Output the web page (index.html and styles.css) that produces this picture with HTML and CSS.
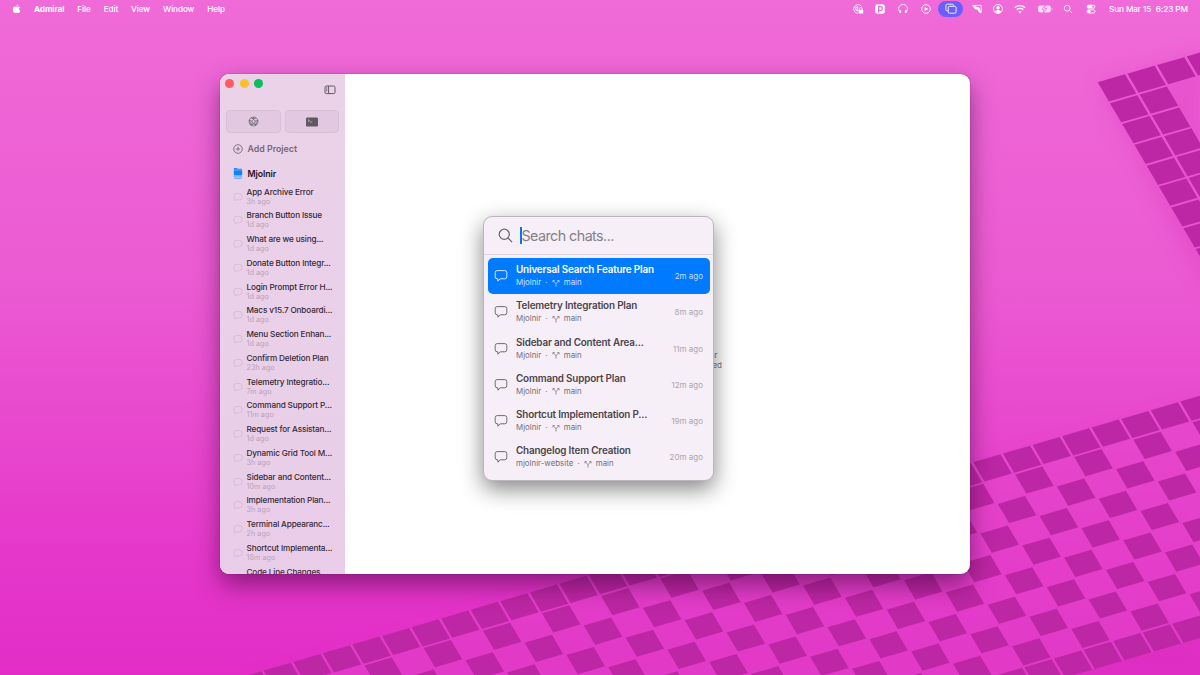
FILE: index.html
```html
<!DOCTYPE html>
<html lang="en">
<head>
<meta charset="utf-8">
<title>Admiral</title>
<link rel="stylesheet" href="styles.css">
</head>
<body>
<svg width="0" height="0" class="defs" aria-hidden="true">
  <symbol id="bubble" viewBox="0 0 14 14"><path d="M3.2 1.6h7.6a2 2 0 0 1 2 2v4.200a2 2 0 0 1-2 2H6.200L3.900 12.200V9.800h-.7a2 2 0 0 1-2-2V3.600a2 2 0 0 1 2-2z"/></symbol>
  <symbol id="dot" viewBox="0 0 10 10"><path d="M3.600 1.500h2.800a2.700 2.700 0 0 1 2.700 2.700v.9a2.700 2.700 0 0 1-2.700 2.700H3.800L1.600 8.700 2 7.200A2.700 2.700 0 0 1 .9 5.100v-.9a2.700 2.700 0 0 1 2.700-2.700z"/></symbol>
  <symbol id="branch" viewBox="0 0 8 8"><path d="M4 7.500V4.700L1.500 2M4 4.700L6.500 2M.9 3.300V1.500h1.800M7.100 3.300V1.500H5.300"/></symbol>
</svg>
<div class="desktop">
  <svg class="wallpaper" viewBox="0 0 1200 675">
    <defs>
      <filter id="soft" x="-10%" y="-10%" width="120%" height="120%"><feGaussianBlur stdDeviation="10"/></filter>
    </defs>
    <path class="shade" d="M1098 84L1210 50V300z M230 690L973 470 1210 402V690z" filter="url(#soft)"/>
    <g transform="matrix(29.57 -8.68 12.25 20.83 973.3 462.3)">
      <rect class="gaps" x="-28" y="0" width="40" height="9.92"/>
      <g class="tiles">
        <path class="solid" d="M-26 .46H12M-30 9.46H12"/>
        <path class="odd" d="M-25 1.46H12M-27 3.46H12M-29 5.46H12M-31 7.46H12"/>
        <path class="odd" d="M-26 2.46H12M-28 4.46H12M-30 6.46H12M-32 8.46H12"/>
      </g>
    </g>
    <g transform="matrix(29.67 -8.62 12.25 20.85 1097.7 82.3)">
      <path class="gaps" d="M0 0H6V.92H1.92V10H0z"/>
      <path class="tiles solid" d="M0 .46H6M0 1.46H1.95M0 2.46H1.95M0 3.46H1.95M0 4.46H1.95M0 5.46H1.95M0 6.46H1.95M0 7.46H1.95M0 8.46H1.95M0 9.46H1.95"/>
    </g>
  </svg>

  <header class="menubar">
    <nav class="menus">
      <svg class="apple" viewBox="0 0 10 11"><path d="M6.900.2c.1 1-.9 2.100-2 2.100C4.800 1.300 5.900.3 6.900.2zM8.900 3.700c-1.500.9-1.200 3 .3 3.700-.4 1.200-1.200 2.600-2.200 2.600-.7 0-.9-.4-1.800-.4s-1.100.4-1.800.4C2.300 10 .9 7.900.9 5.700c0-2 1.200-3.100 2.500-3.100.8 0 1.300.5 1.900.5s1.100-.5 2.100-.5c.6 0 1.200.4 1.500 1.100z"/></svg>
      <b>Admiral</b><span>File</span><span>Edit</span><span>View</span><span>Window</span><span>Help</span>
    </nav>
    <div class="status">
      <svg viewBox="0 0 12 12"><path class="l" d="M9.600 3.300A4.400 4.400 0 1 0 5.500 10.400M5.600 3.200v5.400M5.600 4.400H3.800v2.800h1.800"/><rect class="f" x="6.600" y="6.800" width="4.600" height="3.800" rx=".7"/><path class="l" d="M7.600 7V5.700a1.300 1.300 0 0 1 2.600 0V7"/></svg>
      <svg viewBox="0 0 12 12"><rect class="f" x="1.200" y="1.200" width="9.600" height="9.600" rx="2.400"/><path class="cut" d="M4.600 9.500V3.700h1.900a1.800 1.800 0 0 1 0 3.600H4.600"/></svg>
      <svg viewBox="0 0 12 12"><path class="l" d="M3.300 9.300C-.2 5.500 2.300 1.500 6 1.500s6.200 4 2.700 7.800"/><path class="l t" d="M3.300 7.300v2.800M8.700 7.300v2.800"/></svg>
      <svg viewBox="0 0 12 12"><circle class="l" cx="6" cy="6" r="4.300"/><path class="f" d="M4.700 3.900v4.200L8.300 6z"/></svg>
      <div class="pill"><svg viewBox="0 0 12 12"><path class="l" d="M2.800 7.900H2.200A1.300 1.300 0 0 1 .9 6.600V2.500a1.300 1.300 0 0 1 1.300-1.300h5.100a1.300 1.300 0 0 1 1.300 1.300v.4"/><rect class="l" x="3.200" y="3.300" width="7.900" height="6.900" rx="1.400"/></svg></div>
      <svg viewBox="0 0 12 12"><path class="l flag" d="M1.600 2.400h8.600v7.200H8.900L6.600 6.200 4 5.800z"/><path class="f" d="M2 2.600l6.700 2.200 1.300 4.800H8.900L6.600 6.200 4 5.800z"/></svg>
      <svg viewBox="0 0 12 12"><circle class="l" cx="6" cy="6" r="4.500"/><circle class="f" cx="6" cy="4.700" r="1.700"/><path class="f" d="M2.900 8.600c1.200-2.100 5-2.100 6.200 0C7.500 10.600 4.500 10.600 2.900 8.600z"/></svg>
      <svg viewBox="0 0 12 12"><path class="l w" d="M.9 4.700a7.300 7.300 0 0 1 10.200 0M2.800 6.800a4.600 4.600 0 0 1 6.400 0"/><path class="f" d="M6 10.400L4.200 8.500a2.600 2.600 0 0 1 3.600 0z"/></svg>
      <svg class="battery" viewBox="0 0 17 12"><rect class="f body" x="1" y="2.600" width="12.800" height="6.800" rx="1.800"/><path class="f body" d="M14.600 4.800c1.300.4 1.300 2 0 2.400z"/><path class="bolt" d="M8.300 2.300L5.100 6.400h2.100l-.8 3.300 3.300-4.200H7.600z"/></svg>
      <svg viewBox="0 0 12 12"><circle class="l" cx="5.200" cy="5.200" r="2.900"/><path class="l" d="M7.400 7.400l2.600 2.600"/></svg>
      <svg viewBox="0 0 12 12"><rect class="f" x="1.700" y="1.700" width="8.600" height="3.900" rx="1.950"/><circle class="hole" cx="8.200" cy="3.650" r="1.100"/><rect class="l" x="2" y="6.800" width="8" height="3.200" rx="1.600"/><circle class="f" cx="4" cy="8.400" r="1.600"/></svg>
      <time><span>Sun Mar 15</span><span>6:23 PM</span></time>
    </div>
  </header>

  <main class="window">
    <aside class="sidebar">
      <div class="titlebar">
        <div class="lights"><i class="red"></i><i class="yellow"></i><i class="green"></i></div>
        <svg class="toggle" viewBox="0 0 12 10"><rect x="1" y="1" width="10" height="7.600" rx="1.400"/><path d="M4.600 1v7.600M2.200 2.800h1.100M2.200 4.300h1.100M2.200 5.800h1.100"/></svg>
      </div>
      <div class="tabs">
        <div class="tab"><svg viewBox="0 0 12 12"><circle cx="6" cy="6" r="4.900"/><path d="M6 3.900l2 1.500-.8 2.300H4.800L4 5.400zM6 1.100v2.800M10.700 4.700L8 5.400M8.800 9.900L7.200 7.700M3.200 9.900l1.600-2.200M1.300 4.700L4 5.400M3.200 2.200L6 3.100l2.800-.9M10.700 4.700L9.200 7.200l-.4 2.700M8.800 9.900L6 9 3.200 9.900 2.800 7.200 1.300 4.700"/></svg></div>
        <div class="tab"><svg class="term" viewBox="0 0 12 10"><rect x="0" y=".5" width="12" height="9" rx="1.300"/><path d="M1.900 2.500l1.600 1.100-1.600 1.100M4.200 5h2"/></svg></div>
      </div>
      <div class="add"><svg viewBox="0 0 10 10"><circle cx="5" cy="5" r="4.300"/><path d="M5 2.800v4.400M2.800 5h4.400"/></svg>Add Project</div>
      <div class="project"><svg viewBox="0 0 10 12"><path d="M.8 1.700q0-.8.8-.8h2l.9.8h4q.7 0 .7.700v.3H.8z"/><path d="M.8 3.300h8.400v4.500q0 .8-.8.800H1.600q-.8 0-.8-.8z"/><path class="thin" d="M.8 9.800h8.400M1.200 11.300h7.600"/></svg>Mjolnir</div>
      <ul class="chats">
        <li><svg><use href="#dot"/></svg><div><p>App Archive Error</p><small>3h ago</small></div></li>
        <li><svg><use href="#dot"/></svg><div><p>Branch Button Issue</p><small>1d ago</small></div></li>
        <li><svg><use href="#dot"/></svg><div><p>What are we using...</p><small>1d ago</small></div></li>
        <li><svg><use href="#dot"/></svg><div><p>Donate Button Integr...</p><small>1d ago</small></div></li>
        <li><svg><use href="#dot"/></svg><div><p>Login Prompt Error H...</p><small>1d ago</small></div></li>
        <li><svg><use href="#dot"/></svg><div><p>Macs v15.7 Onboardi...</p><small>1d ago</small></div></li>
        <li><svg><use href="#dot"/></svg><div><p>Menu Section Enhan...</p><small>1d ago</small></div></li>
        <li><svg><use href="#dot"/></svg><div><p>Confirm Deletion Plan</p><small>23h ago</small></div></li>
        <li><svg><use href="#dot"/></svg><div><p>Telemetry Integratio...</p><small>7m ago</small></div></li>
        <li><svg><use href="#dot"/></svg><div><p>Command Support P...</p><small>11m ago</small></div></li>
        <li><svg><use href="#dot"/></svg><div><p>Request for Assistan...</p><small>1d ago</small></div></li>
        <li><svg><use href="#dot"/></svg><div><p>Dynamic Grid Tool M...</p><small>3h ago</small></div></li>
        <li><svg><use href="#dot"/></svg><div><p>Sidebar and Content...</p><small>10m ago</small></div></li>
        <li><svg><use href="#dot"/></svg><div><p>Implementation Plan...</p><small>3h ago</small></div></li>
        <li><svg><use href="#dot"/></svg><div><p>Terminal Appearanc...</p><small>2h ago</small></div></li>
        <li><svg><use href="#dot"/></svg><div><p>Shortcut Implementa...</p><small>18m ago</small></div></li>
        <li><div class="last"><p>Code Line Changes</p></div></li>
      </ul>
    </aside>
    <section class="content"><p class="hint"><span class="first">ar</span><span>ed</span></p></section>
  </main>

  <div class="palette">
    <div class="search"><svg viewBox="0 0 16 16"><circle cx="6.700" cy="6.700" r="5.400"/><path d="M10.700 10.700l4.300 4.300"/></svg><i class="caret"></i><span>Search chats...</span></div>
    <div class="results">
      <div class="row active"><svg class="ico"><use href="#bubble"/></svg><div class="info"><h3>Universal Search Feature Plan</h3><div class="meta"><span>Mjolnir</span><em>·</em><svg><use href="#branch"/></svg><span>main</span></div></div><span class="ago">2m ago</span></div>
      <div class="row"><svg class="ico"><use href="#bubble"/></svg><div class="info"><h3>Telemetry Integration Plan</h3><div class="meta"><span>Mjolnir</span><em>·</em><svg><use href="#branch"/></svg><span>main</span></div></div><span class="ago">8m ago</span></div>
      <div class="row"><svg class="ico"><use href="#bubble"/></svg><div class="info"><h3>Sidebar and Content Area...</h3><div class="meta"><span>Mjolnir</span><em>·</em><svg><use href="#branch"/></svg><span>main</span></div></div><span class="ago">11m ago</span></div>
      <div class="row"><svg class="ico"><use href="#bubble"/></svg><div class="info"><h3>Command Support Plan</h3><div class="meta"><span>Mjolnir</span><em>·</em><svg><use href="#branch"/></svg><span>main</span></div></div><span class="ago">12m ago</span></div>
      <div class="row"><svg class="ico"><use href="#bubble"/></svg><div class="info"><h3>Shortcut Implementation P...</h3><div class="meta"><span>Mjolnir</span><em>·</em><svg><use href="#branch"/></svg><span>main</span></div></div><span class="ago">19m ago</span></div>
      <div class="row"><svg class="ico"><use href="#bubble"/></svg><div class="info"><h3>Changelog Item Creation</h3><div class="meta"><span>mjolnir-website</span><em>·</em><svg><use href="#branch"/></svg><span>main</span></div></div><span class="ago">20m ago</span></div>
    </div>
  </div>
</div>
</body>
</html>
```
FILE: styles.css
```css
* { box-sizing: border-box; }
body, p, ul, h3 { margin: 0; padding: 0; }
ul { list-style: none; }
body { font-family: Inter, "Liberation Sans", sans-serif; overflow: hidden; }
svg { display: block; flex: none; }
.defs { position: absolute; }

.desktop {
  position: relative;
  width: 1200px;
  height: 675px;
  overflow: hidden;
  background: linear-gradient(#f06ad8, #eb5ad2 42%, #e536ca 84%, #e22ec6);
}
.wallpaper { position: absolute; inset: 0; }
.shade { fill: #d82dbb; opacity: .3; }
.gaps { fill: #f060d8; opacity: .24; }
.tiles { stroke: #bd26a4; fill: none; stroke-width: .92; }
.solid { stroke-dasharray: .92 .08; }
.odd { stroke-dasharray: .92 1.08; }

.menubar {
  position: relative;
  height: 18px;
  display: flex;
  justify-content: space-between;
  color: #fff;
  font-size: 8.200px;
  letter-spacing: -.1px;
  line-height: 18px;
  font-weight: 500;
}
.menus { display: flex; padding-left: 12px; gap: 13px; white-space: nowrap; }
.menus b { font-weight: 700; }
.apple { width: 9px; height: 10px; margin: 4px 0 0; fill: #fff; }
.status {
  display: grid;
  grid-template-columns: 22px 22px 24px 21px 29px 23px 19px 26px 24px 22px 24px 97px;
  align-items: center;
  justify-items: center;
  width: 353px;
}
.status svg { width: 12px; height: 12px; }
.status .battery { width: 17px; }
.l { fill: none; stroke: #fff; stroke-width: .9; }
.flag { stroke-linejoin: round; }
.t { stroke-width: 1.6; }
.w { stroke-width: 1.4; }
.f { fill: #fff; }
.body { opacity: .75; }
.cut { fill: none; stroke: #ef68d7; stroke-width: 1.300; }
.hole { fill: #ef68d7; }
.bolt { fill: #fff; stroke: #ef68d7; stroke-width: .8; }
.pill {
  width: 25px;
  height: 15.500px;
  border-radius: 8px;
  background: #6d5dfc;
  display: grid;
  place-items: center;
}
.status time { display: flex; gap: 4.500px; white-space: nowrap; justify-self: start; padding-left: 6px; }

.window {
  position: absolute;
  left: 220px;
  top: 74px;
  width: 750px;
  height: 499.500px;
  border-radius: 9px;
  background: #fff;
  display: flex;
  overflow: hidden;
  box-shadow: 0 0 1px rgba(40, 0, 40, .9), 0 11px 24px rgba(50, 0, 50, .5);
}
.sidebar { width: 125px; background: linear-gradient(#ead2e8, #e9cde8); overflow: hidden; flex: none; }
.titlebar { display: flex; justify-content: space-between; height: 36px; padding: 5px 9px 0 5px; }
.lights { display: flex; gap: 5.500px; }
.lights i { width: 9px; height: 9px; border-radius: 50%; }
.red { background: #fe5a5f; }
.yellow { background: #fdbf2a; }
.green { background: #08bf5c; }
.toggle { width: 12px; height: 10px; margin-top: 6px; fill: none; stroke: #554d55; stroke-width: .9; }
.tabs { display: flex; gap: 4px; padding: 0 6px; }
.tab {
  flex: 1;
  height: 23px;
  border-radius: 4px;
  border: 1px solid #d9bfd8;
  background: #e2c9e1;
  display: grid;
  place-items: center;
}
.tab svg { width: 11px; height: 11px; fill: none; stroke: #645b64; stroke-width: .75; }
.tab .term { width: 12px; height: 10px; stroke: #d9c6d8; fill: none; }
.term rect { fill: #615861; stroke: none; }
.add {
  display: flex;
  gap: 4.500px;
  align-items: center;
  padding-left: 13px;
  height: 31px;
  font-size: 8.800px;
  font-weight: 600;
  color: #746a74;
}
.add svg { width: 10px; height: 10px; fill: none; stroke: #776d77; stroke-width: .9; }
.project {
  display: flex;
  gap: 4.500px;
  align-items: center;
  padding-left: 13px;
  height: 18px;
  font-size: 8.800px;
  letter-spacing: -.1px;
  font-weight: 600;
  color: #1c131c;
}
.project svg { width: 10px; height: 12px; fill: #0b84f5; }
.project .thin { stroke: #3b9cf4; stroke-width: .8; }
.chats { padding: 3.500px 0 0 12.500px; }
.chats li { display: flex; gap: 4px; height: 23.760px; }
.chats svg { width: 10px; height: 10px; margin-top: 6px; fill: none; stroke: #d5b8d4; stroke-width: .8; }
.chats div { padding-top: 1px; white-space: nowrap; }
.chats .last { padding-left: 14px; }
.chats p { font-size: 8.200px; letter-spacing: -.15px; line-height: 11px; color: #352a35; font-weight: 500; }
.chats small { display: block; font-size: 7.200px; line-height: 8.500px; color: #b9a1b8; letter-spacing: .05px; }

.content { flex: 1; display: flex; flex-direction: column; align-items: center; }
.hint {
  display: flex;
  flex-direction: column;
  align-items: flex-end;
  width: 129px;
  margin-top: 276px;
  font-size: 8px;
  line-height: 10px;
  color: #777;
}
.hint .first { padding-right: 4.500px; }

.palette {
  position: absolute;
  left: 483px;
  top: 216px;
  width: 231px;
  height: 264.500px;
  border-radius: 9px;
  border: 1px solid #bdb5bd;
  background: #f6eff7;
  box-shadow: 0 8px 22px rgba(0, 0, 0, .48);
}
.search {
  height: 38px;
  display: flex;
  align-items: center;
  padding-left: 13.500px;
  border-bottom: 1px solid #ddd4de;
  font-size: 14.300px;
  letter-spacing: -.55px;
  color: #858087;
}
.search svg { width: 15px; height: 15px; fill: none; stroke: #68626a; stroke-width: 1.300; }
.caret { width: 1.500px; height: 17px; background: #0877ee; margin-left: 7.500px; }
.results { padding: 3px 3.500px; }
.row {
  height: 36.250px;
  display: flex;
  align-items: center;
  padding: 0 6.500px 0 6.500px;
  border-radius: 5px;
  color: #777079;
}
.ico { width: 14px; height: 14px; margin-right: 8px; fill: none; stroke: #726b73; stroke-width: 1; }
.info { flex: 1; white-space: nowrap; }
.row h3 { font-size: 9.900px; line-height: 13px; font-weight: 600; color: #4b444d; letter-spacing: -.17px; }
.meta { display: flex; align-items: center; font-size: 7.900px; line-height: 13px; }
.meta em { font-style: normal; width: 10.500px; text-align: center; }
.meta svg { width: 8px; height: 8px; fill: none; stroke: currentColor; stroke-width: .75; margin-right: 4px; }
.ago { font-size: 8px; color: #aca5ae; }
.row.active { background: #007aff; color: #cbe3ff; }
.active h3 { color: #fff; }
.active .ico { stroke: #dcecff; }
.active .ago { color: #c5dfff; }
```
